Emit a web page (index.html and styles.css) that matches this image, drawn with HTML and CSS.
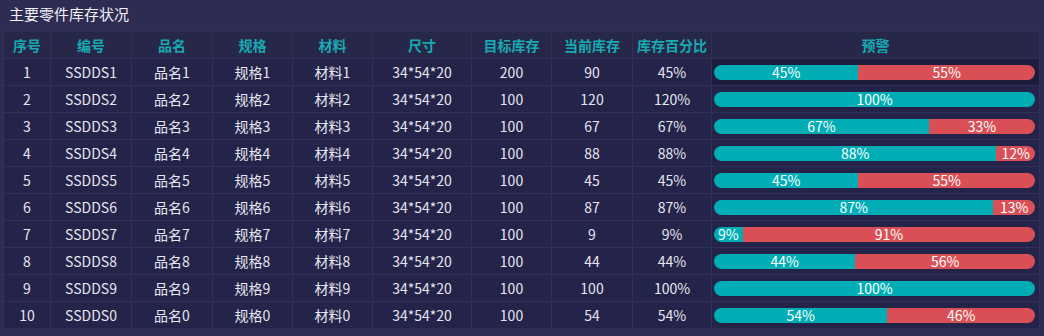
FILE: index.html
```html
<!DOCTYPE html>
<html lang="zh-CN">
<head>
    <meta charset="UTF-8">
    <title>主要零件库存状况</title>
    <link rel="stylesheet" href="styles.css">
</head>
<body>
    <div class="panel">
        <div class="panel-title">主要零件库存状况</div>
        <table class="stock-table">
            <colgroup>
                <col style="width:47px">
                <col style="width:81px">
                <col style="width:81px">
                <col style="width:80px">
                <col style="width:80px">
                <col style="width:99px">
                <col style="width:80px">
                <col style="width:81px">
                <col style="width:79px">
                <col>
            </colgroup>
            <thead>
                <tr>
                    <th>序号</th><th>编号</th><th>品名</th><th>规格</th><th>材料</th>
                    <th>尺寸</th><th>目标库存</th><th>当前库存</th><th>库存百分比</th><th>预警</th>
                </tr>
            </thead>
            <tbody id="rows"></tbody>
        </table>
    </div>

    <script>
        const data = [
            [1, 'SSDDS1', '品名1', '规格1', '材料1', 200, 90, 45],
            [2, 'SSDDS2', '品名2', '规格2', '材料2', 100, 120, 120],
            [3, 'SSDDS3', '品名3', '规格3', '材料3', 100, 67, 67],
            [4, 'SSDDS4', '品名4', '规格4', '材料4', 100, 88, 88],
            [5, 'SSDDS5', '品名5', '规格5', '材料5', 100, 45, 45],
            [6, 'SSDDS6', '品名6', '规格6', '材料6', 100, 87, 87],
            [7, 'SSDDS7', '品名7', '规格7', '材料7', 100, 9, 9],
            [8, 'SSDDS8', '品名8', '规格8', '材料8', 100, 44, 44],
            [9, 'SSDDS9', '品名9', '规格9', '材料9', 100, 100, 100],
            [10, 'SSDDS0', '品名0', '规格0', '材料0', 100, 54, 54]
        ];

        function bar(pct) {
            const ok = Math.min(pct, 100);
            const rest = 100 - ok;
            let html = '<div class="bar">';
            html += `<div class="seg ok" style="width:${ok}%">${ok}%</div>`;
            if (rest > 0) {
                html += `<div class="seg warn" style="width:${rest}%">${rest}%</div>`;
            }
            return html + '</div>';
        }

        const tbody = document.getElementById('rows');
        tbody.innerHTML = data.map((r, i) => `
            <tr>
                <td>${r[0]}</td><td>${r[1]}</td><td>${r[2]}</td><td>${r[3]}</td><td>${r[4]}</td>
                <td>34*54*20</td><td>${r[5]}</td><td>${r[6]}</td><td>${r[7]}%</td>
                <td class="bar-cell${i === 0 ? ' active' : ''}">${bar(r[7])}</td>
            </tr>`).join('');
    </script>
</body>
</html>
```

FILE: styles.css
```css
body {
    margin: 0;
    background: #2e2c52;
    font-family: "Microsoft YaHei", "Noto Sans CJK SC", sans-serif;
    color: #e6e6f0;
}

.panel {
    padding: 4px 4px 0 3px;
    height: 336px;
    box-sizing: border-box;
}

.panel-title {
    font-size: 15px;
    color: #f2f2f8;
    padding-left: 6px;
    height: 27px;
    line-height: 20px;
}

.stock-table {
    width: 1037px;
    border-collapse: collapse;
    table-layout: fixed;
    font-size: 14px;
}

.stock-table th,
.stock-table td {
    border: 1px solid #30305a;
    text-align: center;
    height: 26px;
    padding: 0;
    white-space: nowrap;
}

.stock-table th {
    background: #272749;
    color: #17aab3;
    font-weight: bold;
    font-size: 14px;
}

.stock-table td {
    background: #24244a;
}

.stock-table td.active {
    background: #1c1c3d;
}

.bar-cell {
    padding: 0 4px 0 2px !important;
}

.bar {
    display: flex;
    height: 15px;
}

.seg {
    font-size: 14px;
    line-height: 15px;
    color: #ffffff;
    text-align: center;
    white-space: nowrap;
}

.seg:first-child {
    border-radius: 8px 0 0 8px;
}

.seg:last-child {
    border-radius: 0 8px 8px 0;
}

.seg:only-child {
    border-radius: 8px;
}

.seg.ok {
    background: #00adb5;
}

.seg.warn {
    background: #d94f55;
}
```
